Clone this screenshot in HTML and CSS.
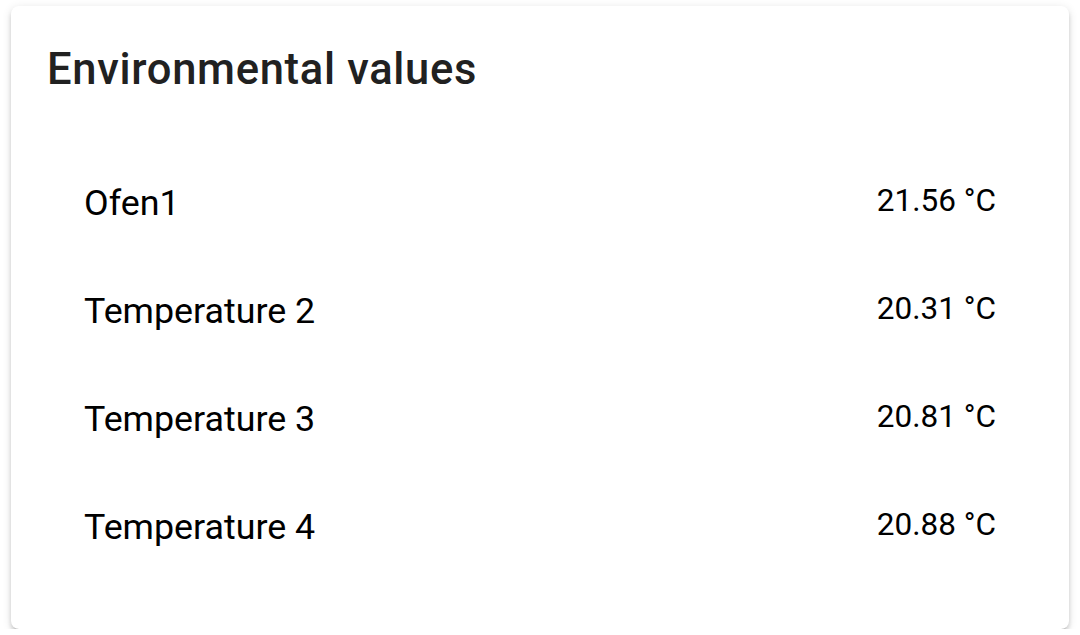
FILE: index.html
```html
<!DOCTYPE html>
<html>
<head>
<meta charset="utf-8">
<link rel="stylesheet" href="styles.css">
</head>
<body>
<div class="card">
  <h1 class="title">Environmental values</h1>
  <div class="rows">
    <div class="row"><span class="name">Ofen1</span><span class="value">21.56 °C</span></div>
    <div class="row"><span class="name">Temperature 2</span><span class="value">20.31 °C</span></div>
    <div class="row"><span class="name">Temperature 3</span><span class="value">20.81 °C</span></div>
    <div class="row"><span class="name">Temperature 4</span><span class="value">20.88 °C</span></div>
  </div>
</div>
</body>
</html>
```

FILE: styles.css
```css
html, body {
  margin: 0;
  padding: 0;
  background: #ffffff;
  font-family: Roboto, "Noto Sans", sans-serif;
}
body {
  padding: 6px 11px 0 11px;
}
.card {
  box-sizing: border-box;
  height: 623px;
  background: #ffffff;
  border-radius: 8px;
  box-shadow: 0 4px 4px 0 rgba(0,0,0,0.14), 0 2px 10px 0 rgba(0,0,0,0.12), 0 6px 2px -4px rgba(0,0,0,0.2);
  padding: 0 73px 0 36px;
}
.title {
  margin: 0;
  padding-top: 40px;
  font-size: 43.5px;
  line-height: 48px;
  font-weight: 500;
  letter-spacing: 0.7px;
  color: #212121;
}
.rows {
  display: flex;
  flex-direction: column;
  padding-left: 37px;
  padding-top: 55px;
}
.row {
  display: flex;
  justify-content: space-between;
  align-items: center;
  height: 108px;
  color: #000000;
}
.name {
  font-size: 35.8px;
}
.value {
  font-size: 31.5px;
  margin-bottom: 6px;
}
```
